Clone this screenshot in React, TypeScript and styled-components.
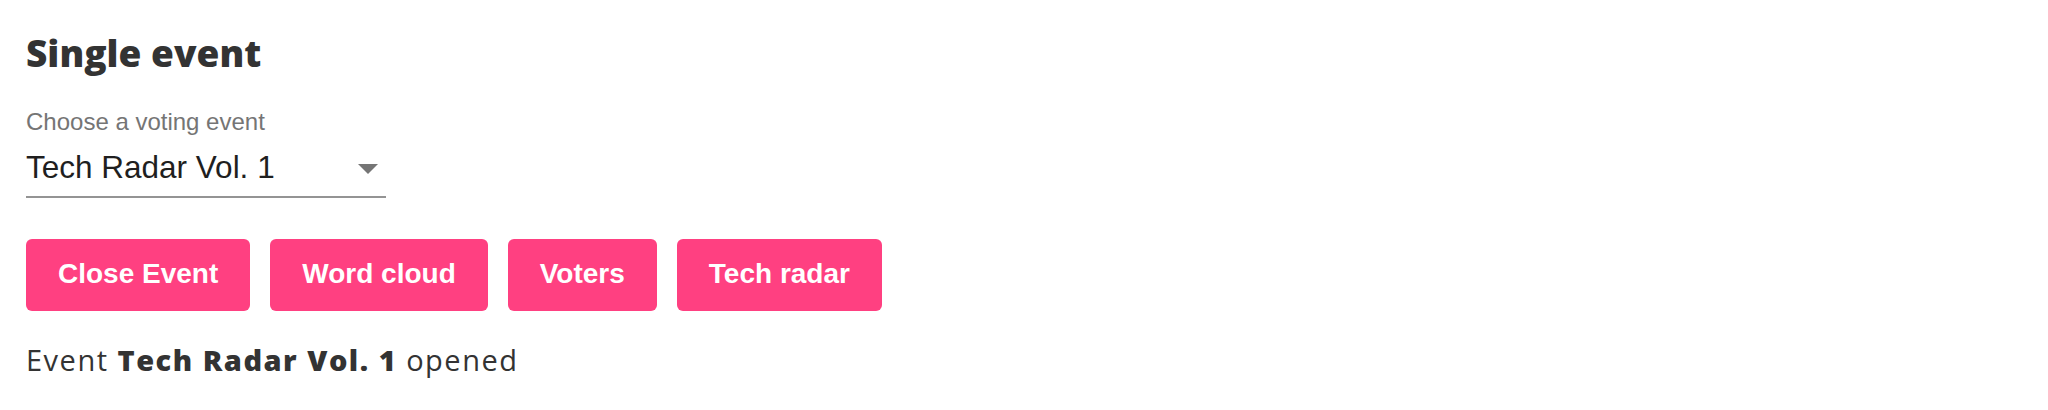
import React from "react";
import styled, { createGlobalStyle } from "styled-components";

const Global = createGlobalStyle`
  html, body { margin: 0; padding: 0; background: #ffffff; }
  body { font-family: "Open Sans", "Liberation Sans", sans-serif; color: #333333; }
`;

const Page = styled.div`
  display: flex;
  flex-direction: column;
  align-items: flex-start;
  padding: 31px 26px 0 26px;
`;

const Heading = styled.h2`
  margin: 0;
  font-family: "Open Sans", sans-serif;
  font-weight: 800;
  font-size: 37px;
  line-height: 44px;
  color: #333333;
`;

const Field = styled.div`
  display: flex;
  flex-direction: column;
  width: 360px;
  margin-top: 35px;
`;

const Label = styled.label`
  font-family: "Liberation Sans", Arial, sans-serif;
  font-size: 24px;
  line-height: 24px;
  color: #757575;
`;

const SelectBox = styled.div`
  display: flex;
  align-items: center;
  justify-content: space-between;
  margin-top: 15px;
  padding-bottom: 10px;
  border-bottom: 2px solid #949494;
`;

const SelectValue = styled.span`
  font-family: "Liberation Sans", Arial, sans-serif;
  font-size: 31.5px;
  line-height: 37px;
  color: #1f1f1f;
`;

const Arrow = styled.svg`
  width: 20px;
  height: 10px;
  margin-right: 8px;
  margin-top: 2px;
`;

const ButtonRow = styled.div`
  display: flex;
  gap: 20px;
  margin-top: 41px;
`;

const Button = styled.button`
  border: none;
  border-radius: 6px;
  background: #ff4081;
  color: #ffffff;
  font-family: "Liberation Sans", Arial, sans-serif;
  font-weight: 700;
  font-size: 28px;
  line-height: 32px;
  padding: 19px 32px 21px 32px;
  cursor: pointer;
`;

const Status = styled.p`
  margin: 29px 0 0 0;
  font-family: "Open Sans", sans-serif;
  font-weight: 400;
  font-size: 29px;
  letter-spacing: 1.5px;
  line-height: 40px;
  color: #333333;
`;

const Strong = styled.strong`
  font-weight: 800;
`;

export default function App() {
  const buttons = ["Close Event", "Word cloud", "Voters", "Tech radar"];
  return (
    <>
      <Global />
      <Page>
        <Heading>Single event</Heading>
        <Field>
          <Label>Choose a voting event</Label>
          <SelectBox>
            <SelectValue>Tech Radar Vol. 1</SelectValue>
            <Arrow viewBox="0 0 20 10">
              <path d="M0 0 L20 0 L10 10 Z" fill="#757575" />
            </Arrow>
          </SelectBox>
        </Field>
        <ButtonRow>
          {buttons.map((b) => (
            <Button key={b}>{b}</Button>
          ))}
        </ButtonRow>
        <Status>
          Event <Strong>Tech Radar Vol. 1</Strong> opened
        </Status>
      </Page>
    </>
  );
}
